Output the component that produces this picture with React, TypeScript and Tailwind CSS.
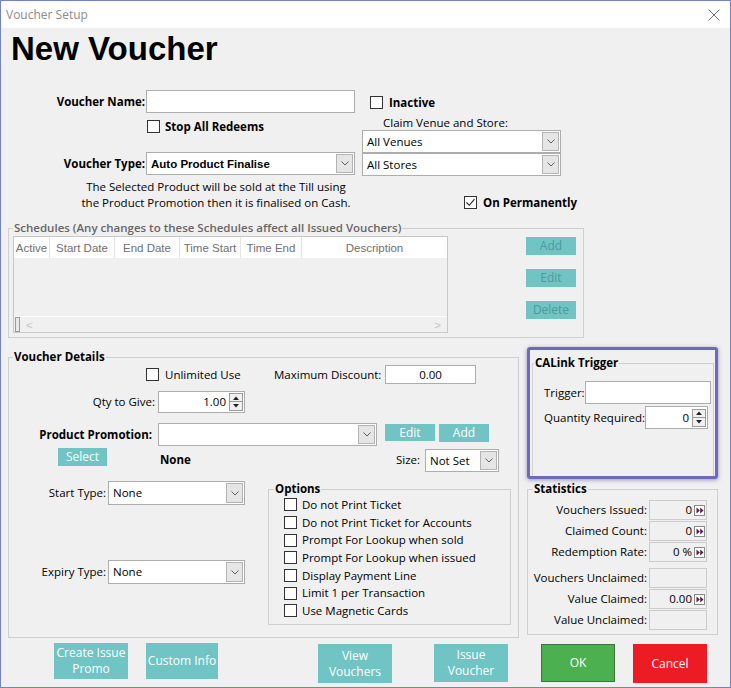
import React from "react";

// small win-forms style pieces
function Check({ checked = false }: { checked?: boolean }) {
  return (
    <span className="w-[13px] h-[13px] border border-[#333333] bg-white flex items-center justify-center shrink-0">
      {checked && (
        <svg width="11" height="11" viewBox="0 0 11 11">
          <path d="M1.5 5.5 L4.3 8.3 L9.5 2.2" fill="none" stroke="#222" strokeWidth="1.1" />
        </svg>
      )}
    </span>
  );
}

function Combo({ w, h, children }: { w: string; h: string; children?: React.ReactNode }) {
  return (
    <div className={`flex items-stretch bg-white border border-[#adadad] ${w} ${h}`}>
      <span className="flex-1 flex items-center pl-[4px] overflow-hidden whitespace-nowrap">{children}</span>
      <span className="w-[17px] m-[1px] bg-[#e5e5e5] border border-[#b4b4b4] flex items-center justify-center">
        <svg width="8" height="5" viewBox="0 0 8 5">
          <path d="M0.5 0.5 L4 4 L7.5 0.5" fill="none" stroke="#606060" strokeWidth="1" />
        </svg>
      </span>
    </div>
  );
}

function Spin({ w, h, value }: { w: string; h: string; value: string }) {
  return (
    <div className={`flex items-center bg-white border border-[#adadad] shrink-0 ${w} ${h}`}>
      <span className="flex-1 text-right pr-[3px]">{value}</span>
      <div className="flex flex-col w-[14px] mr-[1px]">
        <span className="h-[9px] border border-[#9a9a9a] bg-[#f0f0f0] flex items-center justify-center">
          <svg width="6" height="4" viewBox="0 0 6 4">
            <path d="M0 4 L3 0.5 L6 4Z" fill="#222" />
          </svg>
        </span>
        <span className="h-[9px] border border-t-0 border-[#9a9a9a] bg-[#f0f0f0] flex items-center justify-center">
          <svg width="6" height="4" viewBox="0 0 6 4">
            <path d="M0 0 L3 3.5 L6 0Z" fill="#222" />
          </svg>
        </span>
      </div>
    </div>
  );
}

function Go() {
  return (
    <span className="w-[11px] h-[11px] border border-[#8a8a8a] bg-white flex items-center justify-center">
      <svg width="8" height="7" viewBox="0 0 8 7">
        <path d="M0.5 0.5 L3.8 3.5 L0.5 6.5Z M4.2 0.5 L7.5 3.5 L4.2 6.5Z" fill="#5a1a48" />
      </svg>
    </span>
  );
}

function StatRow({ label, value, go = false, extra = "" }: { label: string; value?: string; go?: boolean; extra?: string }) {
  return (
    <div className={`flex items-center h-[20px] ${extra}`}>
      <span className="w-[121px] text-right pr-[2px] whitespace-nowrap">{label}</span>
      <div className="w-[58px] h-[20px] border border-[#cccccc] bg-[#f0f0f0] flex items-center justify-end gap-[2px] pr-[1px]">
        {value && <span>{value}</span>}
        {go && <Go />}
      </div>
    </div>
  );
}

const cols = [
  { label: "Active", w: "w-[36px]" },
  { label: "Start Date", w: "w-[65px]" },
  { label: "End Date", w: "w-[65px]" },
  { label: "Time Start", w: "w-[61px]" },
  { label: "Time End", w: "w-[61px]" },
];

const options = [
  "Do not Print Ticket",
  "Do not Print Ticket for Accounts",
  "Prompt For Lookup when sold",
  "Prompt For Lookup when issued",
  "Display Payment Line",
  "Limit 1 per Transaction",
  "Use Magnetic Cards",
];

export default function App() {
  return (
    <div className="w-[731px] h-[688px] border border-[#7483c2] bg-[#f0f0f0] overflow-hidden font-['Open_Sans',sans-serif] text-[11.5px] leading-[14px] text-black whitespace-nowrap">
      {/* title bar */}
      <div className="h-[27px] bg-white flex items-center justify-between pl-[5px] pr-[10px]">
        <span className="text-[12px] text-[#8c8c8c]">Voucher Setup</span>
        <svg width="12" height="12" viewBox="0 0 12 12">
          <path d="M0.5 0.5 L11.5 11.5 M11.5 0.5 L0.5 11.5" stroke="#777" strokeWidth="1" />
        </svg>
      </div>

      <div className="pl-[7px]">
        <h1 className="mt-[5px] ml-[3px] font-['Liberation_Sans',Arial,sans-serif] font-bold text-[33px] leading-[32px]">
          New Voucher
        </h1>

        {/* top section */}
        <div className="flex items-start mt-[25px]">
          <div className="w-[347px]">
            <div className="flex items-center h-[23px]">
              <span className="w-[138px] text-right pr-[1px] font-bold">Voucher Name:</span>
              <div className="w-[209px] h-[23px] bg-white border border-[#adadad]" />
            </div>
            <div className="mt-[7px] ml-[139px] flex items-center gap-[5px] h-[13px]">
              <Check />
              <span className="font-bold">Stop All Redeems</span>
            </div>
            <div className="mt-[19px] flex items-center h-[23px]">
              <span className="w-[138px] text-right pr-[1px] font-bold">Voucher Type:</span>
              <Combo w="w-[209px]" h="h-[23px]">
                <span className="font-['Liberation_Sans',Arial,sans-serif] font-bold text-[11.5px]">Auto Product Finalise</span>
              </Combo>
            </div>
            <p className="mt-[4px] ml-[72px] w-[272px] text-center leading-[16px]">
              The Selected Product will be sold at the Till using
              <br />
              the Product Promotion then it is finalised on Cash.
            </p>
          </div>

          <div className="ml-[7px] w-[199px]">
            <div className="mt-[6px] ml-[8px] flex items-center gap-[6px] h-[13px]">
              <Check />
              <span className="font-bold">Inactive</span>
            </div>
            <div className="mt-[7px] ml-[21px] h-[14px]">Claim Venue and Store:</div>
            <Combo w="w-[199px]" h="h-[23px]">All Venues</Combo>
            <Combo w="w-[199px]" h="h-[23px]">All Stores</Combo>
            <div className="mt-[20px] ml-[102px] flex items-center gap-[6px] h-[13px]">
              <Check checked />
              <span className="font-bold">On Permanently</span>
            </div>
          </div>
        </div>

        {/* schedules */}
        <fieldset className="mt-[10px] w-[576px] border border-[#cfcfcf] pl-[4px] pb-[4px]">
          <legend className="px-[1px] font-semibold text-[#666666]">
            Schedules (Any changes to these Schedules affect all Issued Vouchers)
          </legend>
          <div className="flex items-start mt-[1px]">
            <div className="w-[435px] h-[97px] border border-[#c8c8c8] bg-[#f0f0f0] flex flex-col font-['Liberation_Sans',Arial,sans-serif] text-[11.5px] text-[#707070]">
              <div className="h-[21px] bg-white flex">
                {cols.map((c) => (
                  <div key={c.label} className={`${c.w} border-r border-[#e5e5e5] flex items-center justify-center`}>
                    {c.label}
                  </div>
                ))}
                <div className="flex-1 flex items-center justify-center">Description</div>
              </div>
              <div className="flex-1" />
              <div className="h-[16px] border-t border-white flex items-center justify-between text-[#c4c4c4]">
                <div className="flex items-center">
                  <span className="ml-[1px] w-[5px] h-[15px] border border-[#9a9a9a] bg-[#e8e8e8]" />
                  <span className="ml-[6px]">&lt;</span>
                </div>
                <span className="mr-[6px]">&gt;</span>
              </div>
            </div>
            <div className="ml-[78px] mt-[1px] flex flex-col gap-[14px]">
              {["Add", "Edit", "Delete"].map((b) => (
                <button key={b} className="w-[50px] h-[18px] bg-[#70c4c4] text-[#4c9a9a] text-[12px] leading-[18px]">
                  {b}
                </button>
              ))}
            </div>
          </div>
        </fieldset>

        {/* lower section */}
        <div className="flex items-start mt-[9px]">
          <fieldset className="mt-[3px] w-[511px] h-[288px] border border-[#cfcfcf]">
            <legend className="ml-[4px] px-[1px] font-bold">Voucher Details</legend>

            <div className="mt-[1px] flex items-center h-[19px]">
              <div className="w-[265px] flex items-center gap-[6px]">
                <span className="ml-[137px]">
                  <Check />
                </span>
                <span>Unlimited Use</span>
              </div>
              <span className="w-[111px]">Maximum Discount:</span>
              <div className="w-[91px] h-[19px] bg-white border border-[#adadad] flex items-center justify-center">0.00</div>
            </div>

            <div className="mt-[7px] flex items-center h-[22px]">
              <span className="w-[149px] text-right pr-[3px]">Qty to Give:</span>
              <Spin w="w-[87px]" h="h-[22px]" value="1.00" />
            </div>

            <div className="mt-[10px] flex items-start h-[23px]">
              <span className="w-[149px] text-right pr-[6px] font-bold self-center">Product Promotion:</span>
              <Combo w="w-[219px]" h="h-[23px]" />
              <button className="ml-[8px] mt-[1px] w-[50px] h-[17px] bg-[#70c4c4] text-white text-[12px] leading-[17px]">Edit</button>
              <button className="ml-[4px] mt-[1px] w-[50px] h-[18px] bg-[#70c4c4] text-white text-[12px] leading-[18px]">Add</button>
            </div>

            <div className="mt-[2px] flex items-start h-[24px]">
              <button className="ml-[49px] w-[49px] h-[18px] bg-[#70c4c4] text-white text-[12px] leading-[18px]">Select</button>
              <span className="ml-[53px] w-[236px] font-bold self-center">None</span>
              <span className="w-[29px] self-center">Size:</span>
              <div className="mt-[1px]">
                <Combo w="w-[74px]" h="h-[23px]">Not Set</Combo>
              </div>
            </div>

            <div className="flex items-start">
              <div className="w-[259px]">
                <div className="mt-[9px] flex items-center h-[24px]">
                  <span className="w-[99px] text-right pr-[2px]">Start Type:</span>
                  <Combo w="w-[137px]" h="h-[24px]">None</Combo>
                </div>
                <div className="mt-[55px] flex items-center h-[24px]">
                  <span className="w-[99px] text-right pr-[2px]">Expiry Type:</span>
                  <Combo w="w-[137px]" h="h-[24px]">None</Combo>
                </div>
              </div>
              <fieldset className="mt-[10px] w-[243px] h-[143px] border border-[#cfcfcf]">
                <legend className="ml-[5px] px-[1px] font-bold">Options</legend>
                <div className="flex flex-col pl-[15px]">
                  {options.map((o) => (
                    <div key={o} className="h-[17.7px] flex items-center gap-[5px]">
                      <Check />
                      <span>{o}</span>
                    </div>
                  ))}
                </div>
              </fieldset>
            </div>
          </fieldset>

          <div className="ml-[8px] w-[191px]">
            <div className="h-[132px] border-[3px] border-[#6b6bb9] rounded-[3px] shadow-[0_1px_4px_rgba(60,60,140,0.5)]">
              <fieldset className="ml-[2px] mt-[6px] w-[182px] h-[120px] border border-b-0 border-[#cfcfcf]">
                <legend className="ml-[1px] px-[1px] font-bold">CALink Trigger</legend>
                <div className="mt-[11px] flex items-center h-[23px]">
                  <span className="ml-[11px] w-[41px]">Trigger:</span>
                  <div className="w-[126px] h-[23px] bg-white border border-[#adadad]" />
                </div>
                <div className="mt-[2px] flex items-center h-[23px]">
                  <span className="ml-[11px] w-[101px]">Quantity Required:</span>
                  <Spin w="w-[63px]" h="h-[23px]" value="0" />
                </div>
              </fieldset>
            </div>

            <fieldset className="mt-[3px] w-[191px] h-[153px] border border-[#cfcfcf]">
              <legend className="ml-[5px] px-[1px] font-bold">Statistics</legend>
              <div className="mt-[4px] flex flex-col gap-[1px]">
                <StatRow label="Vouchers Issued:" value="0" go />
                <StatRow label="Claimed Count:" value="0" go />
                <StatRow label="Redemption Rate:" value="0 %" go />
                <StatRow label="Vouchers Unclaimed:" extra="mt-[5px]" />
                <StatRow label="Value Claimed:" value="0.00" go />
                <StatRow label="Value Unclaimed:" />
              </div>
            </fieldset>
          </div>
        </div>

        {/* bottom buttons */}
        <div className="mt-[5px] flex items-start text-white text-[12px] leading-[16px]">
          <button className="ml-[46px] w-[74px] h-[36px] bg-[#70c4c4]">
            Create Issue
            <br />
            Promo
          </button>
          <button className="ml-[18px] w-[72px] h-[36px] bg-[#70c4c4]">Custom Info</button>
          <button className="ml-[100px] mt-[1px] w-[74px] h-[39px] bg-[#70c4c4]">
            View
            <br />
            Vouchers
          </button>
          <button className="ml-[42px] mt-[1px] w-[74px] h-[38px] bg-[#70c4c4]">
            Issue
            <br />
            Voucher
          </button>
          <button className="ml-[33px] mt-[1px] w-[74px] h-[38px] bg-[#4caf50] border border-[#3b743b]">OK</button>
          <button className="ml-[18px] mt-[1px] w-[74px] h-[39px] bg-[#ed1c24]">Cancel</button>
        </div>
      </div>
    </div>
  );
}
